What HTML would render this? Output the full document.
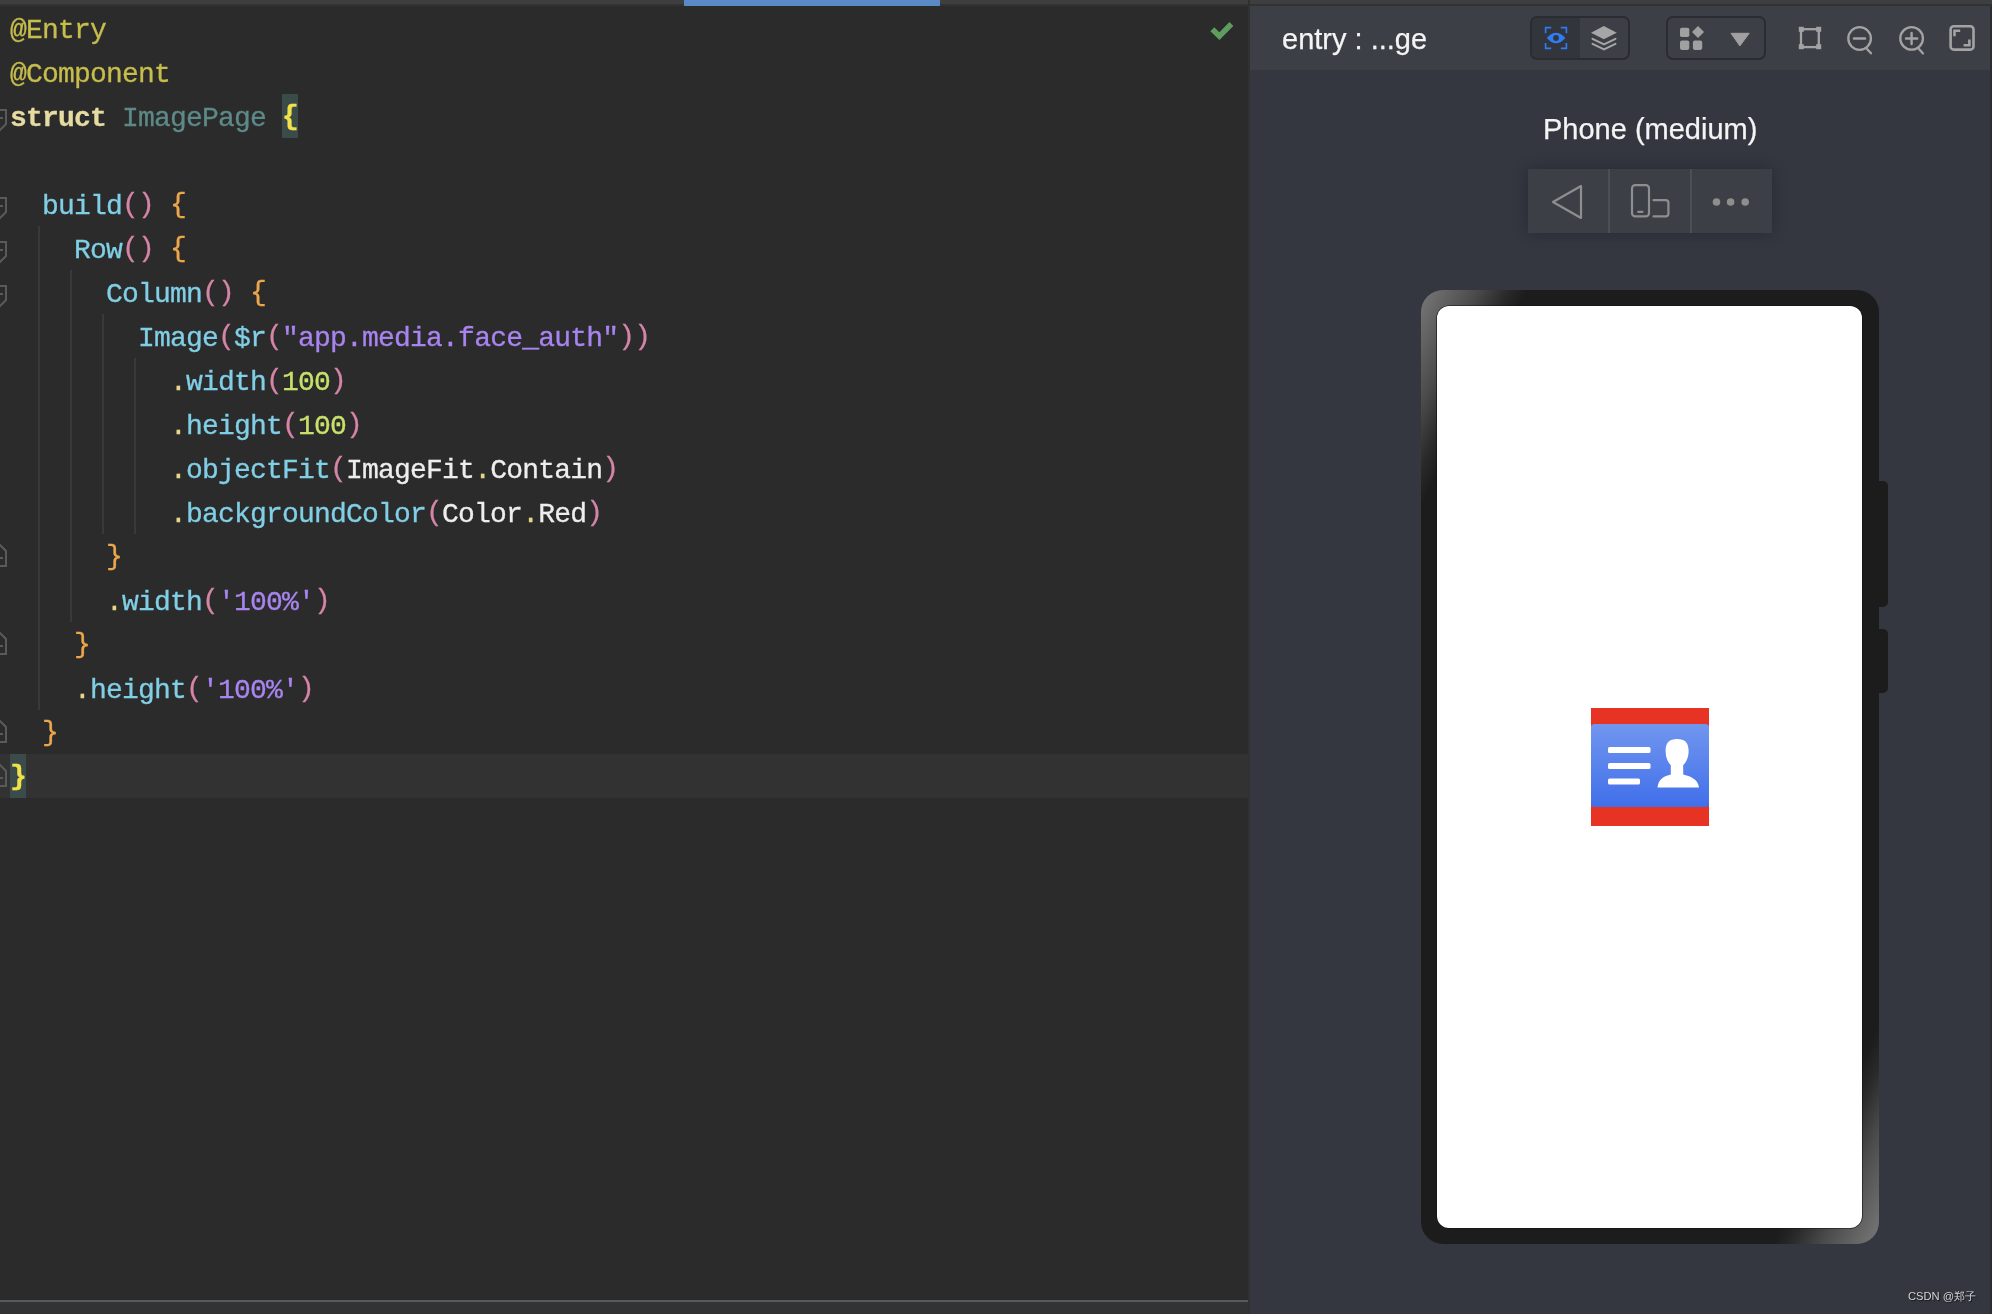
<!DOCTYPE html>
<html><head><meta charset="utf-8">
<style>
*{margin:0;padding:0;box-sizing:border-box}
html,body{width:1992px;height:1314px;overflow:hidden;background:#2b2b2b}
body{position:relative;font-family:"Liberation Sans",sans-serif}
#topbar{position:absolute;left:0;top:0;width:1992px;height:6px;background:#3d3e40;border-bottom:2px solid #323233}
#topblue{position:absolute;left:684px;top:0;width:256px;height:6px;background:#5a8ac6}
#topdiv{position:absolute;left:1248px;top:0;width:2px;height:6px;background:#303030}
#editor{position:absolute;left:0;top:6px;width:1248px;height:1294px;background:#2b2b2b;overflow:hidden}
#edbottom{position:absolute;left:0;top:1300px;width:1248px;height:14px;background:#323335;border-top:2px solid #595a5c}
#divider{position:absolute;left:1248px;top:6px;width:2px;height:1308px;background:#313131}
.cur{position:absolute;left:0;top:748px;width:1248px;height:44px;background:#323232}
.code{position:absolute;left:10px;top:3px;font-family:"Liberation Mono",monospace;font-size:28px;letter-spacing:-0.8px;line-height:44px;white-space:pre;color:#d8d8d8;-webkit-text-stroke:0.3px currentColor;will-change:transform}
.ln{height:44px;position:relative}
.guide{position:absolute;width:2px;background:#393939}
.hl{background:#3a4b4a;display:inline-block;height:44px;vertical-align:top;width:16px;margin-top:-3px;padding-top:3px}
.an{color:#c6bd4c}
.kw{color:#e6dba0;font-weight:bold}
.cl{color:#5d8a88}
.fn{color:#80cfe6}
.pa{color:#d585a6;position:relative;top:-2px}
.br{color:#eca74c;position:relative;top:-2px}
.bry{color:#f2e24a;font-weight:bold;position:relative;top:-2px}
.st{color:#a884f0}
.nu{color:#c6e06a}
.dt{color:#e6d68a}
.wh{color:#eeeeee}
.fold{position:absolute;left:-4px;width:11px;height:22px}
#check{position:absolute;left:1210px;top:22px}
#panel{position:absolute;left:1250px;top:6px;width:1742px;height:1308px;background:#343740}
#tb{position:absolute;left:1250px;top:6px;width:742px;height:64px;background:#3c3f46}
#title{position:absolute;left:1282px;top:23px;font-size:29px;color:#f4f4f4;-webkit-text-stroke:0.25px #f4f4f4;white-space:pre}
.grp{position:absolute;top:16px;height:44px;border:2px solid #2a2c30;border-radius:7px;background:#3c3f46;overflow:hidden}
#rightedge{position:absolute;left:1990px;top:6px;width:2px;height:1308px;background:#2a2c30}
#phonetitle{position:absolute;left:1543px;top:113px;font-size:29px;-webkit-text-stroke:0.25px #f4f4f4;color:#f4f4f4;white-space:pre}
#btnbar{position:absolute;left:1528px;top:169px;width:244px;height:64px;background:#3c3f46;box-shadow:0 0 14px rgba(0,0,0,0.25)}
.sep{position:absolute;top:0;width:2px;height:64px;background:#4c4f55}
#phone{position:absolute;left:1421px;top:290px;width:458px;height:954px;border-radius:22px;background:linear-gradient(116deg,#787878 0%,#6a6a6a 2%,#4c4c4c 6%,#2a2a2a 9.4%,#1c1c1c 11.5%,#1c1c1c 88.5%,#2a2a2a 90.6%,#4c4c4c 94%,#6a6a6a 98%,#787878 100%)}
#screen{position:absolute;left:1437px;top:306px;width:425px;height:922px;border-radius:12px;background:#ffffff;box-shadow:0 0 0 0.6px #121212}
.sidebtn{position:absolute;left:1878px;width:10px;background:#1c1c1c;border-radius:0 5px 5px 0}
#wm{position:absolute;left:1908px;top:1289px;font-size:11.2px;color:#d4d4d4;white-space:pre;text-shadow:1px 1px 1px rgba(0,0,0,0.6)}
</style></head><body>
<div id="editor">
  <div class="cur"></div>
  <div class="code"><div class="ln"><span class="an">@Entry</span></div><div class="ln"><span class="an">@Component</span></div><div class="ln"><span class="kw">struct</span> <span class="cl">ImagePage</span> <span class="hl"><span class="bry">{</span></span></div><div class="ln"> </div><div class="ln">  <span class="fn">build</span><span class="pa">()</span> <span class="br">{</span></div><div class="ln">    <span class="fn">Row</span><span class="pa">()</span> <span class="br">{</span></div><div class="ln">      <span class="fn">Column</span><span class="pa">()</span> <span class="br">{</span></div><div class="ln">        <span class="fn">Image</span><span class="pa">(</span><span class="fn">$r</span><span class="pa">(</span><span class="st">"app.media.face_auth"</span><span class="pa">))</span></div><div class="ln">          <span class="dt">.</span><span class="fn">width</span><span class="pa">(</span><span class="nu">100</span><span class="pa">)</span></div><div class="ln">          <span class="dt">.</span><span class="fn">height</span><span class="pa">(</span><span class="nu">100</span><span class="pa">)</span></div><div class="ln">          <span class="dt">.</span><span class="fn">objectFit</span><span class="pa">(</span><span class="wh">ImageFit</span><span class="dt">.</span><span class="wh">Contain</span><span class="pa">)</span></div><div class="ln">          <span class="dt">.</span><span class="fn">backgroundColor</span><span class="pa">(</span><span class="wh">Color</span><span class="dt">.</span><span class="wh">Red</span><span class="pa">)</span></div><div class="ln">      <span class="br">}</span></div><div class="ln">      <span class="dt">.</span><span class="fn">width</span><span class="pa">(</span><span class="st">'100%'</span><span class="pa">)</span></div><div class="ln">    <span class="br">}</span></div><div class="ln">    <span class="dt">.</span><span class="fn">height</span><span class="pa">(</span><span class="st">'100%'</span><span class="pa">)</span></div><div class="ln">  <span class="br">}</span></div><div class="ln"><span class="hl"><span class="bry">}</span></span></div></div>
</div>
<div id="topbar"></div>
<div id="topblue"></div><div id="topdiv"></div>
<div id="edbottom"></div>
<div id="divider"></div>
<div id="panel"></div>
<div id="tb"></div>
<div id="rightedge"></div>
<svg id="ov" width="1992" height="1314" viewBox="0 0 1992 1314" style="position:absolute;left:0;top:0">
<!-- indent guides -->
<g fill="#393939">
<rect x="38" y="226" width="2" height="484"/>
<rect x="70" y="270" width="2" height="352"/>
<rect x="102" y="314" width="2" height="220"/>
<rect x="134" y="358" width="2" height="176"/>
</g>
<!-- fold markers -->
<g fill="none" stroke="#5a5a5a" stroke-width="2">
<path d="M-2,110 H6 V124 L-1,131"/><path d="M0,118 H3"/>
<path d="M-2,198 H6 V212 L-1,219"/><path d="M0,206 H3"/>
<path d="M-2,242 H6 V256 L-1,263"/><path d="M0,250 H3"/>
<path d="M-2,286 H6 V300 L-1,307"/><path d="M0,294 H3"/>
<path d="M-1,544 L6,551 V566 H-2"/><path d="M0,558 H3"/>
<path d="M-1,632 L6,639 V654 H-2"/><path d="M0,646 H3"/>
<path d="M-1,720 L6,727 V742 H-2"/><path d="M0,734 H3"/>
<path d="M-1,764 L6,771 V786 H-2"/><path d="M0,778 H3"/>
</g>
<!-- check -->
<path d="M1212.3,29.2 L1219.4,36.2 L1231.4,24" fill="none" stroke="#5f9c5f" stroke-width="5.5"/>
<!-- group 1 -->
<rect x="1531" y="17" width="98" height="42" rx="6" fill="#3c3f46" stroke="#2a2c31" stroke-width="2"/>
<path d="M1538,18 H1580 V58 H1538 A6,6 0 0 1 1532,52 V24 A6,6 0 0 1 1538,18 Z" fill="#32353c"/>
<g fill="none" stroke="#2f7df6" stroke-width="1.6">
<path d="M1545.6,33.2 V27.6 H1551.2"/><path d="M1560.8,27.6 H1566.4 V33.2"/>
<path d="M1545.6,43 V48.4 H1551.2"/><path d="M1560.8,48.4 H1566.4 V43"/>
</g>
<path d="M1546.8,38 Q1556,27.4 1565.4,38 Q1556,48.6 1546.8,38 Z" fill="#2f7df6"/>
<circle cx="1556" cy="38" r="2.9" fill="#32353c"/>
<g fill="#a6a6a6">
<path d="M1591,32.8 L1603.8,26 L1616.8,32.8 L1603.8,39.3 Z"/>
</g>
<g fill="none" stroke="#a6a6a6" stroke-width="2" stroke-linejoin="round" stroke-linecap="round">
<path d="M1592.5,38.8 L1604,44.4 L1615.5,38.8"/>
<path d="M1592.5,43.8 L1604,49.4 L1615.5,43.8"/>
</g>
<!-- group 2 -->
<rect x="1667" y="17" width="98" height="42" rx="6" fill="#3c3f46" stroke="#2a2c31" stroke-width="2"/>
<g fill="#a0a0a0">
<rect x="1680" y="27.8" width="9.3" height="9.3" rx="1.8"/>
<rect x="1680" y="40.6" width="9.3" height="9.3" rx="1.8"/>
<rect x="1692.9" y="40.6" width="9.3" height="9.3" rx="1.8"/>
<path d="M1698,26 L1704,32 L1698,38 L1692,32 Z"/>
<path d="M1731,33.3 H1749.2 L1739.9,45.9 Z" stroke="#a0a0a0" stroke-width="1" stroke-linejoin="round"/>
</g>
<!-- right icons -->
<g fill="none" stroke="#a3a3a3" stroke-width="2.3">
<rect x="1801" y="29.2" width="17.8" height="17.9"/>
<circle cx="1859.6" cy="38.5" r="11.3"/>
<path d="M1854,38.4 H1865" stroke-linecap="round" stroke-width="2.5"/>
<path d="M1867,49 L1871,53.3" stroke-linecap="round"/>
<circle cx="1911.6" cy="38.4" r="11.3"/>
<path d="M1906,38.5 H1917.2 M1911.6,32.9 V44.1" stroke-linecap="round" stroke-width="2.4"/>
<path d="M1919,49 L1923,53.4" stroke-linecap="round"/>
<rect x="1950.6" y="26.2" width="22.9" height="23.4" rx="3.2" stroke-width="2.6"/>
<path d="M1954.5,36.3 V30.7 H1960.2 M1969.4,39.5 V45.3 H1963.6" stroke-width="2.6"/>
</g>
<g fill="#a3a3a3">
<rect x="1798.8" y="26.8" width="5" height="5"/><rect x="1816.2" y="26.8" width="5" height="5"/>
<rect x="1798.8" y="44.2" width="5" height="5"/><rect x="1816.2" y="44.2" width="5" height="5"/>
</g>
</svg>
<div id="title">entry : ...ge</div>
<div id="phonetitle">Phone (medium)</div>
<div id="btnbar"><div class="sep" style="left:80px"></div><div class="sep" style="left:162px"></div></div>
<div id="phone"></div>
<div id="screen"></div>
<svg width="1992" height="1314" viewBox="0 0 1992 1314" style="position:absolute;left:0;top:0">
<g fill="none" stroke="#8e8e8e" stroke-width="2.2" stroke-linejoin="round" stroke-linecap="round">
<path d="M1553,202 L1581,186 V218 Z"/>
<rect x="1632" y="185.2" width="17" height="31.2" rx="3.2"/>
<path d="M1638.2,211.8 H1642.5"/>
<path d="M1653.5,200.2 H1665.8 A2.6,2.6 0 0 1 1668.4,202.8 V213.8 A2.6,2.6 0 0 1 1665.8,216.4 H1653.5"/>
</g>
<g fill="#8e8e8e">
<circle cx="1716.5" cy="202" r="3.8"/><circle cx="1730.6" cy="202" r="3.8"/><circle cx="1745.2" cy="202" r="3.8"/>
</g>
<!-- image -->
<rect x="1591" y="708" width="118" height="118" fill="#e63323"/>
<defs><linearGradient id="cg" x1="0" y1="0" x2="0" y2="1"><stop offset="0" stop-color="#7196ef"/><stop offset="1" stop-color="#416fea"/></linearGradient></defs>
<rect x="1591" y="724" width="118" height="83" rx="3.5" fill="url(#cg)"/>
<g fill="#ffffff">
<rect x="1608" y="747" width="42.5" height="6" rx="1.5"/>
<rect x="1608" y="763" width="42.5" height="6" rx="1.5"/>
<rect x="1608" y="778.5" width="32" height="6" rx="1.5"/>
<path d="M1665.6,751 C1665.6,742 1669.5,738.9 1677.1,738.9 C1684.7,738.9 1688.6,742 1688.6,751 C1688.6,758 1686,762.5 1683.2,765 V774.5 C1690,776 1698,779 1699,787.5 H1657.5 C1658.5,779 1664,776 1670.8,774.5 V765 C1668,762.5 1665.6,758 1665.6,751 Z"/>
</g>
</svg>
<div class="sidebtn" style="top:481px;height:126px"></div>
<div class="sidebtn" style="top:629px;height:64px"></div>
<div id="wm">CSDN @郑子</div>
</body></html>
